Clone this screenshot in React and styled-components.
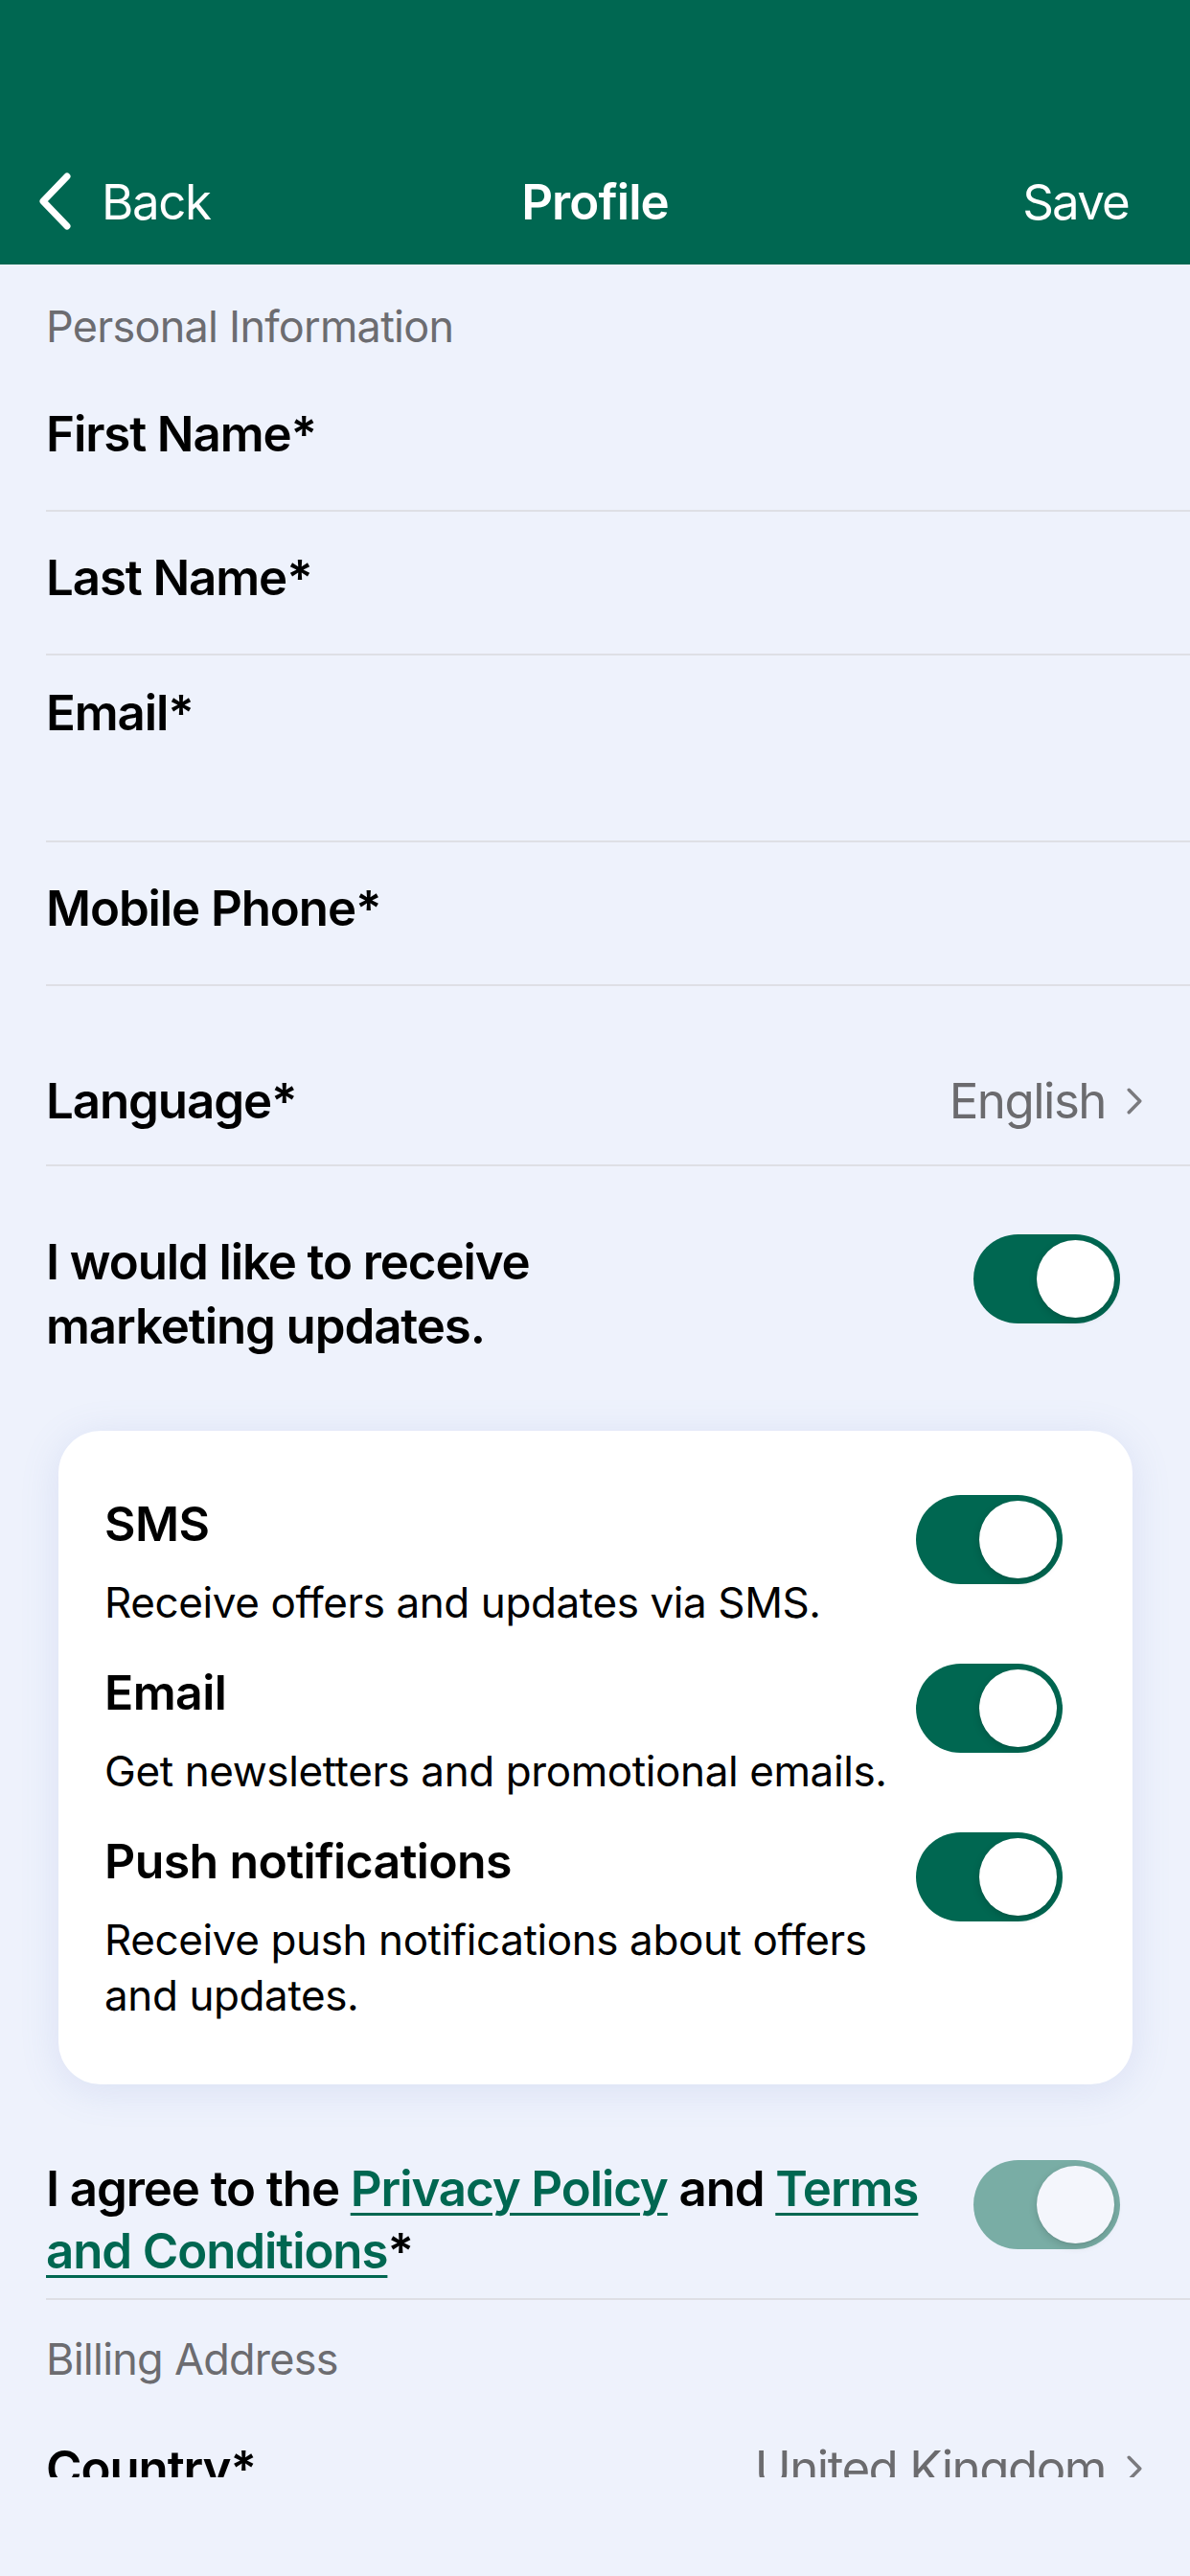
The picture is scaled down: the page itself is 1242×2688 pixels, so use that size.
import React from "react";
import styled, { createGlobalStyle } from "styled-components";

const GREEN = "#006751";
const BG = "#EEF2FC";

const Global = createGlobalStyle`
  html, body { margin: 0; padding: 0; background: ${BG}; }
  body { font-family: Inter, "Noto Sans", "Liberation Sans", sans-serif; -webkit-font-smoothing: antialiased; }
  * { box-sizing: border-box; }
`;

const Page = styled.div`
  width: 1242px;
  height: 2688px;
  display: flex;
  flex-direction: column;
  background: ${BG};
  overflow: hidden;
`;

const Header = styled.header`
  height: 276px;
  flex: none;
  background: ${GREEN};
  display: flex;
  flex-direction: column;
  justify-content: flex-end;
`;

const NavRow = styled.div`
  height: 132px;
  display: grid;
  grid-template-columns: 1fr auto 1fr;
  align-items: center;
  padding: 0 64px;
  color: #fff;
  font-size: 51px;
  line-height: 51px;
`;

const BackButton = styled.div`
  display: flex;
  align-items: center;
  gap: 31px;
  justify-self: start;
  margin-left: -25px;
  font-weight: 400;
  letter-spacing: -1.4px;
`;

const NavTitle = styled.div`
  font-weight: 600;
  letter-spacing: -0.9px;
`;

const NavAction = styled.div`
  justify-self: end;
  font-weight: 400;
  letter-spacing: -1.8px;
`;

const Scroll = styled.main`
  height: 2309px;
  flex: none;
  overflow: hidden;
`;

const Footer = styled.div`
  flex: 1;
  background: ${BG};
`;

const SectionTitle = styled.div`
  margin-left: 48px;
  padding-top: ${(p) => p.$pt}px;
  font-size: 45px;
  line-height: 45px;
  color: #6C6C70;
  letter-spacing: -0.75px;
`;

const Row = styled.div`
  margin-left: 48px;
  height: ${(p) => (p.$h ? `${p.$h}px` : "auto")};
  padding: ${(p) => p.$pt}px ${(p) => p.$pr || 0}px ${(p) => p.$pb || 0}px 0;
  border-bottom: ${(p) => (p.$divider ? "2px solid #DEDFE5" : "none")};
  display: flex;
  align-items: flex-start;
  justify-content: space-between;
  gap: 24px;
`;

const Label = styled.div`
  font-size: 51px;
  line-height: ${(p) => p.$lh || 51}px;
  font-weight: 600;
  color: #000;
  letter-spacing: -1.1px;
`;

const Value = styled.div`
  display: flex;
  align-items: center;
  gap: 22px;
  font-size: 51px;
  line-height: 51px;
  color: #6B6B6E;
  letter-spacing: -1.5px;
`;

const Link = styled.a`
  color: ${GREEN};
  text-decoration: underline;
  text-decoration-thickness: 3px;
  text-underline-offset: 7px;
`;

const Track = styled.div`
  flex: none;
  width: 153px;
  height: 93px;
  margin-top: ${(p) => p.$mt || 0}px;
  border-radius: 47px;
  background: ${(p) => (p.$muted ? "#79ADA5" : GREEN)};
  display: flex;
  align-items: center;
  justify-content: flex-end;
  padding: 0 6px;
`;

const Knob = styled.div`
  width: 81px;
  height: 81px;
  border-radius: 50%;
  background: ${(p) => (p.$muted ? "#F4F6FC" : "#fff")};
  box-shadow: 0 3px 8px rgba(0, 0, 0, 0.15), 0 1px 1px rgba(0, 0, 0, 0.06);
`;

const Card = styled.section`
  margin: 0 60px 0 61px;
  padding: 68px 73px 64px 48px;
  background: #fff;
  border-radius: 44px;
  box-shadow: 0 6px 40px rgba(110, 130, 200, 0.16);
  display: flex;
  flex-direction: column;
  gap: 36px;
`;

const Option = styled.div`
  display: flex;
  align-items: flex-start;
  justify-content: space-between;
  gap: 16px;
`;

const OptionText = styled.div`
  display: flex;
  flex-direction: column;
  gap: 24px;
  flex: 1;
`;

const OptionTitle = styled.div`
  font-size: 50px;
  line-height: 58px;
  font-weight: 600;
  color: #000;
  letter-spacing: -0.6px;
`;

const OptionDesc = styled.div`
  font-size: 44px;
  line-height: 58px;
  color: #000;
  letter-spacing: -0.4px;
`;

const Chevron = ({ w = 16, h = 28, color = "#7A7A7E", sw = 3.5 }) => (
  <svg width={w} height={h} viewBox={`0 0 ${w} ${h}`} fill="none">
    <path
      d={`M${sw / 2 + 0.5} ${sw / 2 + 0.5} L${w - sw / 2 - 0.5} ${h / 2} L${sw / 2 + 0.5} ${h - sw / 2 - 0.5}`}
      stroke={color}
      strokeWidth={sw}
      strokeLinecap="round"
      strokeLinejoin="round"
    />
  </svg>
);

const BackChevron = () => (
  <svg width="36" height="60" viewBox="0 0 36 60" fill="none">
    <path d="M31 4 L6 30 L31 56" stroke="#fff" strokeWidth="7" strokeLinecap="round" strokeLinejoin="round" />
  </svg>
);

const Toggle = ({ muted, mt }) => (
  <Track $muted={muted} $mt={mt}>
    <Knob $muted={muted} />
  </Track>
);

const options = [
  { title: "SMS", desc: "Receive offers and updates via SMS." },
  { title: "Email", desc: "Get newsletters and promotional emails." },
  { title: "Push notifications", desc: "Receive push notifications about offers and updates." },
];

export default function App() {
  return (
    <Page>
      <Global />
      <Header>
        <NavRow>
          <BackButton>
            <BackChevron />
            <span>Back</span>
          </BackButton>
          <NavTitle>Profile</NavTitle>
          <NavAction>Save</NavAction>
        </NavRow>
      </Header>
      <Scroll>
        <SectionTitle $pt={42}>Personal Information</SectionTitle>
        <Row $h={171} $pt={64} $divider>
          <Label>First Name*</Label>
        </Row>
        <Row $h={150} $pt={43} $divider>
          <Label>Last Name*</Label>
        </Row>
        <Row $h={195} $pt={34} $divider>
          <Label>Email*</Label>
        </Row>
        <Row $h={150} $pt={43} $divider>
          <Label>Mobile Phone*</Label>
        </Row>
        <Row $h={188} $pt={94} $pr={50} $divider>
          <Label>Language*</Label>
          <Value>
            English
            <Chevron />
          </Value>
        </Row>
        <Row $pt={66} $pr={73} $pb={76}>
          <Label $lh={67}>
            I would like to receive
            <br />
            marketing updates.
          </Label>
          <Toggle mt={5} />
        </Row>
        <Card>
          {options.map((o) => (
            <Option key={o.title}>
              <OptionText>
                <OptionTitle>{o.title}</OptionTitle>
                <OptionDesc>{o.desc}</OptionDesc>
              </OptionText>
              <Toggle mt={-1} />
            </Option>
          ))}
        </Card>
        <Row $pt={76} $pr={73} $pb={17} $divider>
          <Label $lh={65}>
            I agree to the <Link>Privacy Policy</Link> and <Link>Terms and Conditions</Link>*
          </Label>
          <Toggle muted mt={3} />
        </Row>
        <SectionTitle $pt={39}>Billing Address</SectionTitle>
        <Row $pt={66} $pr={50}>
          <Label>Country*</Label>
          <Value>
            United Kingdom
            <Chevron />
          </Value>
        </Row>
      </Scroll>
      <Footer />
    </Page>
  );
}
